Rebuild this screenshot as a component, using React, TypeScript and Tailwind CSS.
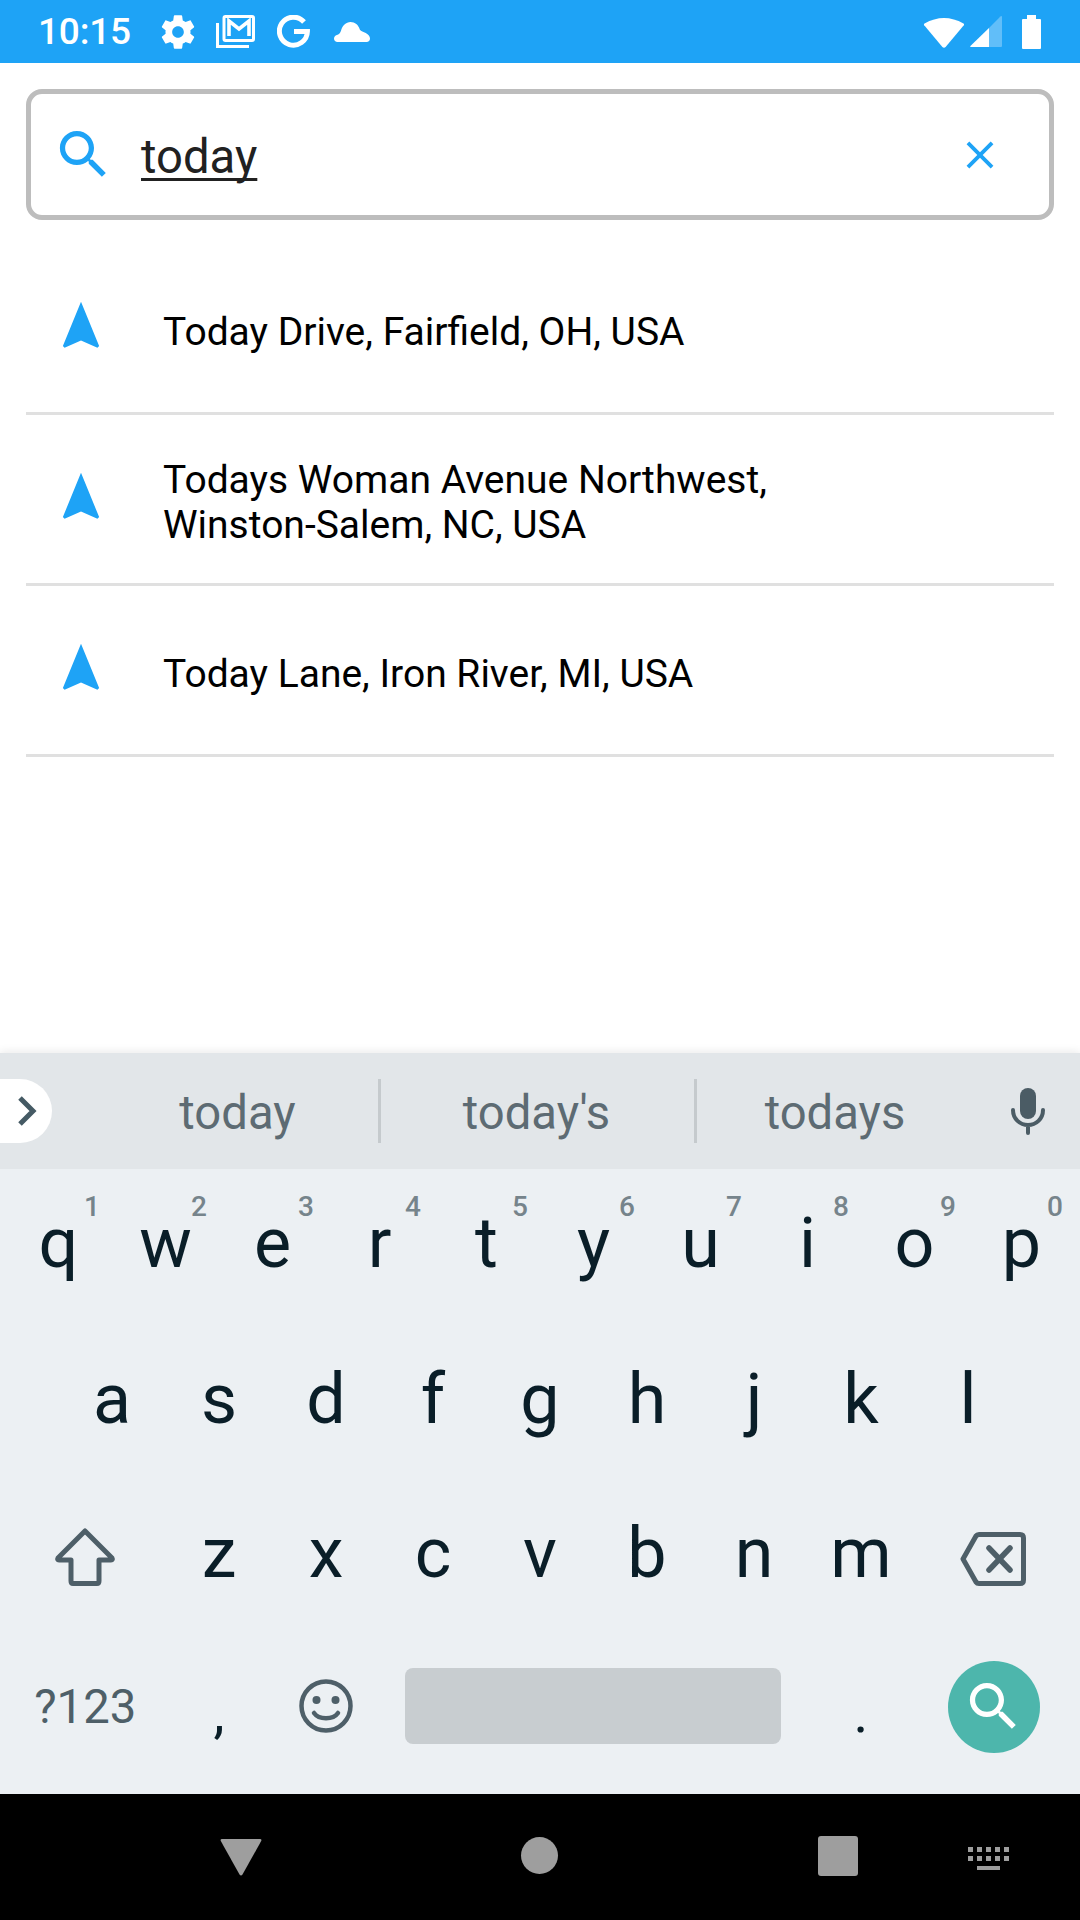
const SEARCH_PATH =
  "M15.5 14h-.79l-.28-.27C15.41 12.59 16 11.11 16 9.5 16 5.91 13.09 3 9.5 3S3 5.91 3 9.5 5.91 16 9.5 16c1.61 0 3.09-.59 4.23-1.57l.27.28v.79l5 4.99L20.49 19l-4.99-5zm-6 0C7.01 14 5 11.99 5 9.5S7.01 5 9.5 5 14 7.01 14 9.5 11.99 14 9.5 14z";
const GEAR_PATH =
  "M19.43 12.98c.04-.32.07-.64.07-.98s-.03-.66-.07-.98l2.11-1.65c.19-.15.24-.42.12-.64l-2-3.46c-.12-.22-.39-.3-.61-.22l-2.49 1c-.52-.4-1.08-.73-1.69-.98l-.38-2.65C14.46 2.18 14.25 2 14 2h-4c-.25 0-.46.18-.49.42l-.38 2.65c-.61.25-1.17.59-1.69.98l-2.49-1c-.23-.09-.49 0-.61.22l-2 3.46c-.13.22-.07.49.12.64l2.11 1.65c-.04.32-.07.65-.07.98s.03.66.07.98l-2.11 1.65c-.19.15-.24.42-.12.64l2 3.46c.12.22.39.3.61.22l2.49-1c.52.4 1.08.73 1.69.98l.38 2.65c.03.24.24.42.49.42h4c.25 0 .46-.18.49-.42l.38-2.65c.61-.25 1.17-.59 1.69-.98l2.49 1c.23.09.49 0 .61-.22l2-3.46c.12-.22.07-.49-.12-.64l-2.11-1.65zM12 15.5c-1.93 0-3.5-1.57-3.5-3.5s1.57-3.5 3.5-3.5 3.5 1.57 3.5 3.5-1.57 3.5-3.5 3.5z";

const results = [
  { id: 1, lines: ["Today Drive, Fairfield, OH, USA"] },
  { id: 2, lines: ["Todays Woman Avenue Northwest,", "Winston-Salem, NC, USA"] },
  { id: 3, lines: ["Today Lane, Iron River, MI, USA"] },
];

const row1 = [
  ["q", "1"],
  ["w", "2"],
  ["e", "3"],
  ["r", "4"],
  ["t", "5"],
  ["y", "6"],
  ["u", "7"],
  ["i", "8"],
  ["o", "9"],
  ["p", "0"],
];
const row2 = ["a", "s", "d", "f", "g", "h", "j", "k", "l"];
const row3 = ["z", "x", "c", "v", "b", "n", "m"];

function StatusBar() {
  return (
    <div className="h-[63px] shrink-0 bg-[#1ea3f6] flex items-center pl-[38px] pr-[39px] text-white">
      <span className="text-[37px] font-medium leading-none tracking-[-0.2px] w-[124px]">10:15</span>
      {/* Gear */}
      <svg viewBox="0 0 24 24" className="w-[40px] h-[40px] fill-white shrink-0 -ml-[4px]">
        <path d={GEAR_PATH} />
      </svg>
      {/* Gmail stack */}
      <svg viewBox="0 0 39 33" className="w-[39px] h-[33px] ml-[18px] shrink-0 fill-none stroke-white">
        <path d="M1.5 8V31.5H33" strokeWidth="3" />
        <rect x="8" y="1.5" width="29.5" height="24" rx="1.5" strokeWidth="3" />
        <path d="M13 21V6L23 14 33 6V21" strokeWidth="3.6" />
      </svg>
      {/* Google G */}
      <svg viewBox="0 0 33 33" className="w-[33px] h-[33px] ml-[22px] shrink-0 fill-none stroke-white">
        <path d="M27 7A14 14 0 1 0 30.4 16.5H17" strokeWidth="5" />
      </svg>
      {/* Cloud */}
      <svg viewBox="0 0 36 20" className="w-[36px] h-[20px] ml-[24px] shrink-0 fill-white">
        <path d="M3.5 20C1.5 20 0 18.6 0 16.6 0 14.6 1.6 13 3.6 12.8 5 12.4 6.2 11 7 8.8 8.2 3.6 12 0 16.5 0 21 0 24.5 3 25.8 7.4 27 9.4 29.5 9.6 31.8 11 34.4 12.4 36 14.4 36 16.6 36 18.6 34.6 20 32.6 20Z" />
      </svg>

      <div className="flex-1" />

      {/* Wifi */}
      <svg viewBox="0 0 42 32" className="w-[42px] h-[32px] shrink-0 fill-white">
        <path d="M1.5 7.5Q21 -3.5 40.5 7.5 41.5 8.2 40.8 9.2L22.6 31Q21 32.6 19.4 31L1.2 9.2Q.5 8.2 1.5 7.5Z" />
      </svg>
      {/* Signal */}
      <svg viewBox="0 0 32 31" className="w-[32px] h-[31px] ml-[5px] shrink-0 fill-white">
        <path d="M19 12V31H1Q-.4 31 .4 30Z" />
        <path d="M19 12 30.4.4Q32 -.4 32 1V30Q32 31 31 31H19Z" opacity="0.3" />
      </svg>
      {/* Battery */}
      <svg viewBox="0 0 19 34" className="w-[19px] h-[34px] ml-[20px] shrink-0 fill-white">
        <path d="M5 0H14V4H18Q19 4 19 5V33Q19 34 18 34H1Q0 34 0 33V5Q0 4 1 4H5Z" />
      </svg>
    </div>
  );
}

function SearchBox() {
  return (
    <div className="mx-[26px] mt-[26px] h-[131px] border-[5px] border-[#bdbdbd] rounded-[16px] flex items-center pl-[21px] pr-[46px]">
      <svg viewBox="0 0 24 24" className="w-[63px] h-[63px] fill-[#1ea3f6] shrink-0">
        <path d={SEARCH_PATH} />
      </svg>
      <span className="ml-[26px] text-[47.25px] leading-none text-[#212121] underline decoration-[2.5px] underline-offset-[5px] [text-decoration-skip-ink:none] pt-[6px]">
        today
      </span>
      <div className="flex-1" />
      <svg viewBox="0 0 24 24" className="w-[46px] h-[46px] fill-[#1ea3f6] shrink-0">
        <path d="M19 6.41L17.59 5 12 10.59 6.41 5 5 6.41 10.59 12 5 17.59 6.41 19 12 13.41 17.59 19 19 17.59 13.41 12z" />
      </svg>
    </div>
  );
}

function ResultRow({ lines }: { lines: string[] }) {
  return (
    <div className="mx-[26px] h-[171px] border-b-[3px] border-[#e0e0e0] flex items-center pl-[26px]">
      <svg viewBox="0 0 24 24" className="w-[58px] h-[58px] fill-[#1ea3f6] shrink-0 -translate-y-[2px]">
        <path d="M12 2L4.5 20.29l.71.71L12 18l6.79 3 .71-.71z" />
      </svg>
      <div className="ml-[53px] text-[39px] leading-[45px] text-black pt-[8px]">
        {lines.map((line) => (
          <div key={line}>{line}</div>
        ))}
      </div>
    </div>
  );
}

function SuggestionStrip() {
  return (
    <div className="h-[116px] bg-[#e2e6e9] flex items-center text-[47.25px] text-[#5d6b73]">
      <div className="w-[52px] h-[64px] bg-white rounded-r-[32px] flex items-center justify-center shrink-0">
        <svg viewBox="0 0 20 30" className="w-[20px] h-[30px] fill-none stroke-[#455a64] ml-[3px]">
          <path d="M2 2L15 15 2 28" strokeWidth="5" />
        </svg>
      </div>
      <div className="w-[326px] pl-[45px] text-center pt-[4px]">today</div>
      <div className="w-[3px] h-[64px] bg-[#c5cacd]" />
      <div className="w-[313px] text-center pt-[4px] pr-[2px]">today&apos;s</div>
      <div className="w-[3px] h-[64px] bg-[#c5cacd]" />
      <div className="w-[276px] text-center pt-[4px]">todays</div>
      <svg viewBox="0 0 34 47" className="w-[34px] h-[47px] ml-[38px] shrink-0">
        <rect x="9" y="0" width="16" height="31" rx="8" fill="#4b5c65" />
        <path d="M2 22C2 31 9 37 17 37S32 31 32 22M17 37V45" fill="none" stroke="#4b5c65" strokeWidth="4" strokeLinecap="round" />
      </svg>
    </div>
  );
}

function LetterKey({ label, hint }: { label: string; hint?: string }) {
  return (
    <div className="relative flex-1 flex items-center justify-center text-[70px] leading-none text-[#0a1e28] pb-[8px]">
      {label}
      {hint && (
        <span className="absolute top-[24px] right-[12px] text-[28px] leading-none font-medium text-[#76848b]">
          {hint}
        </span>
      )}
    </div>
  );
}

function Keyboard() {
  return (
    <div className="shrink-0 shadow-[0_-2px_8px_rgba(0,0,0,0.08)]">
      <SuggestionStrip />
      <div className="h-[625px] bg-[#ecf0f3] px-[5px] flex flex-col">
        <div className="h-[156px] flex">
          {row1.map(([k, n]) => (
            <LetterKey key={k} label={k} hint={n} />
          ))}
        </div>
        <div className="h-[156px] flex px-[53.5px]">
          {row2.map((k) => (
            <LetterKey key={k} label={k} />
          ))}
        </div>
        <div className="h-[156px] flex">
          <div className="w-[160.5px] flex items-center justify-center shrink-0">
            <svg viewBox="0 0 60 58" className="w-[60px] h-[58px] fill-none stroke-[#4e5f68] -mt-[4px]">
              <path d="M30 3L57 30Q58 32 56 32H44V53Q44 55.5 42 55.5H18Q16 55.5 16 53V32H4Q2 32 3 30Z" strokeWidth="5" strokeLinejoin="round" />
            </svg>
          </div>
          {row3.map((k) => (
            <div key={k} className="w-[107px] shrink-0 flex items-center justify-center text-[70px] leading-none text-[#0a1e28] pb-[12px]">
              {k}
            </div>
          ))}
          <div className="flex-1 flex items-center justify-center pr-[3px]">
            <svg viewBox="0 0 66 54" className="w-[66px] h-[54px] fill-none stroke-[#4e5f68]">
              <path d="M19 2.5H60Q63.5 2.5 63.5 6V48Q63.5 51.5 60 51.5H19Q17 51.5 16 50L3 27 16 4Q17 2.5 19 2.5Z" strokeWidth="5" strokeLinejoin="round" />
              <path d="M29 16L50 38M50 16L29 38" strokeWidth="5.5" strokeLinecap="round" />
            </svg>
          </div>
        </div>
        <div className="h-[157px] flex items-center">
          <div className="w-[160.5px] shrink-0 text-center text-[47.25px] leading-none text-[#4e5f68] pb-[16px]">?123</div>
          <div className="w-[107px] shrink-0 text-center text-[56px] leading-none text-[#0a1e28] pb-[6px]">,</div>
          <div className="w-[107px] shrink-0 flex justify-center pb-[20px]">
            <svg viewBox="0 0 54 54" className="w-[54px] h-[54px] fill-none stroke-[#4e5f68]">
              <circle cx="27" cy="27" r="24.5" strokeWidth="4.5" />
              <circle cx="17.5" cy="21" r="4" fill="#4e5f68" stroke="none" />
              <circle cx="36.5" cy="21" r="4" fill="#4e5f68" stroke="none" />
              <path d="M15 34C20 41 34 41 39 34" strokeWidth="4.5" strokeLinecap="round" />
            </svg>
          </div>
          <div className="w-[428px] shrink-0 pl-[25px] mb-[20px]">
            <div className="h-[76px] w-[376px] rounded-[8px] bg-[#c8cdd0]" />
          </div>
          <div className="w-[107px] shrink-0 text-center text-[56px] leading-none text-[#0a1e28] pb-[6px]">.</div>
          <div className="flex-1 flex justify-center pb-[18px] pr-[2px]">
            <div className="w-[92px] h-[92px] rounded-full bg-[#4db6ac] flex items-center justify-center">
              <svg viewBox="0 0 24 24" className="w-[63px] h-[63px] fill-white">
                <path d={SEARCH_PATH} />
              </svg>
            </div>
          </div>
        </div>
      </div>
    </div>
  );
}

function NavBar() {
  return (
    <div className="h-[126px] shrink-0 bg-black flex items-center pl-[220px]">
      <svg viewBox="0 0 42 37" className="w-[42px] h-[37px] fill-[#9e9e9e] shrink-0 mt-[1px]">
        <path d="M2 0H40Q42 0 41.2 2L22.5 35.5Q21 37.5 19.5 35.5L.8 2Q0 0 2 0Z" />
      </svg>
      <div className="w-[37px] h-[37px] rounded-full bg-[#9e9e9e] ml-[259px] shrink-0 -mt-[3px]" />
      <div className="w-[40px] h-[40px] rounded-[3px] bg-[#9e9e9e] ml-[260px] shrink-0 -mt-[3px]" />
      <svg viewBox="0 0 41 23" className="w-[41px] h-[23px] fill-[#9e9e9e] ml-[110px] shrink-0 mt-[3px]">
        <path d="M0 0h5v5H0zM9 0h5v5H9zM18 0h5v5h-5zM27 0h5v5h-5zM36 0h5v5h-5zM0 9h5v5H0zM9 9h5v5H9zM18 9h5v5h-5zM27 9h5v5h-5zM36 9h5v5h-5zM9 19h23v4H9z" />
      </svg>
    </div>
  );
}

export default function App() {
  return (
    <div className="w-[1080px] h-[1920px] bg-white flex flex-col overflow-hidden font-['Roboto',sans-serif]">
      <StatusBar />
      <div className="flex-1">
        <SearchBox />
        <div className="mt-[24px]">
          {results.map((r) => (
            <ResultRow key={r.id} lines={r.lines} />
          ))}
        </div>
      </div>
      <Keyboard />
      <NavBar />
    </div>
  );
}
